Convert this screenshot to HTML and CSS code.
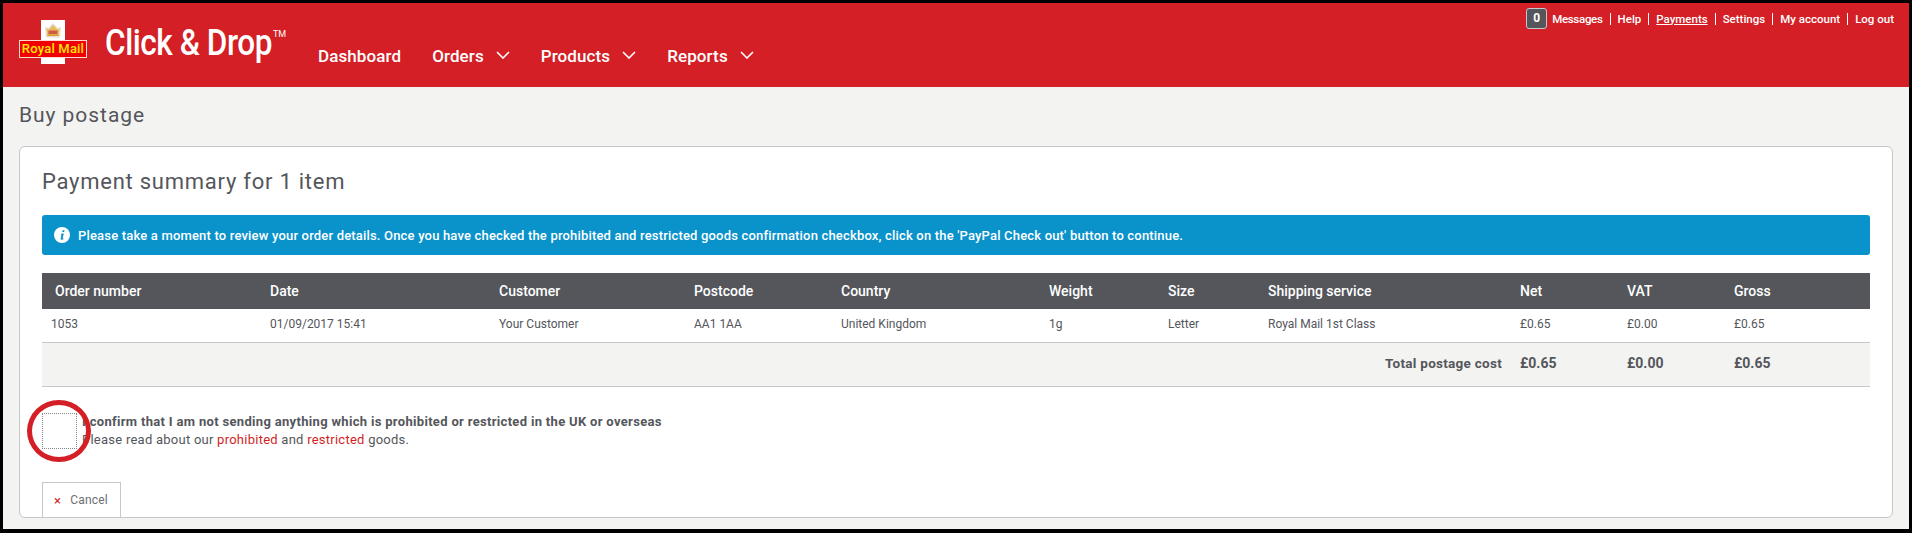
FILE: index.html
```html
<!DOCTYPE html>
<html lang="en">
<head>
<meta charset="utf-8">
<title>Click &amp; Drop - Buy postage</title>
<link rel="stylesheet" href="styles.css">
</head>
<body>
<div class="frame">
  <header class="masthead">
    <svg class="logo" width="70" height="46" viewBox="0 0 70 46" aria-label="Royal Mail">
      <rect x="22" y="0" width="24" height="44" fill="#fff"/>
      <path d="M26 7 L29.500 8 L31.500 5.500 L34 3 L36.500 5.500 L38.500 8 L42 7 L41 17.500 H27 Z" fill="#e6e0d2"/>
      <path d="M27.500 8.500 L30 9.500 L32 7 L34 5 L36 7 L38 9.500 L40.500 8.500 L39.500 16 H28.500 Z" fill="#e9bb5a"/>
      <path d="M29.500 10.500 H38.500 V14 H29.500 Z" fill="#cf5a45"/>
      <rect x="28.500" y="14.500" width="11" height="1.500" fill="#d99a2b"/>
      <rect x="0.500" y="20.500" width="67" height="17" fill="#f00000" stroke="#ffd9d0" stroke-width="1"/>
      <text x="34" y="33.400" text-anchor="middle" class="logo-text">Royal Mail</text>
    </svg>
    <div class="brand"><span class="brandtext">Click &amp; Drop</span><span class="tm">TM</span></div>
    <nav class="mainnav">
      <a class="mainlink">Dashboard</a>
      <a class="mainlink">Orders<svg class="chev" width="14" height="8" viewBox="0 0 14 8"><path d="M1 1 L7 7 L13 1" fill="none" stroke="#fff" stroke-width="1.600"/></svg></a>
      <a class="mainlink">Products<svg class="chev" width="14" height="8" viewBox="0 0 14 8"><path d="M1 1 L7 7 L13 1" fill="none" stroke="#fff" stroke-width="1.600"/></svg></a>
      <a class="mainlink">Reports<svg class="chev" width="14" height="8" viewBox="0 0 14 8"><path d="M1 1 L7 7 L13 1" fill="none" stroke="#fff" stroke-width="1.600"/></svg></a>
    </nav>
    <nav class="topnav">
      <span class="badge">0</span>
      <a class="toplink first">Messages</a>
      <a class="toplink">Help</a>
      <a class="toplink current">Payments</a>
      <a class="toplink">Settings</a>
      <a class="toplink">My account</a>
      <a class="toplink last">Log out</a>
    </nav>
  </header>
  <main class="content">
    <h1 class="pagetitle">Buy postage</h1>
    <section class="card">
      <h2 class="cardtitle">Payment summary for 1 item</h2>
      <div class="alert">
        <svg class="infoicon" width="16" height="16" viewBox="0 0 16 16"><circle cx="8" cy="8" r="8" fill="#fff"/><path d="M8.600 3.200h2l-.4 1.900h-2z M7.600 6.600h2.200l-1.100 4.600c-.1.4.3.5 1 .2l-.1.9c-1.600.7-3.200.5-2.900-.9l.8-3.800h-.9z" fill="#0a92cb"/></svg>
        <span>Please take a moment to review your order details. Once you have checked the prohibited and restricted goods confirmation checkbox, click on the 'PayPal Check out' button to continue.</span>
      </div>
      <table class="summary">
        <colgroup>
          <col class="c1"><col class="c2"><col class="c3"><col class="c4"><col class="c5"><col class="c6"><col class="c7"><col class="c8"><col class="c9"><col class="c10"><col class="c11">
        </colgroup>
        <thead>
          <tr>
            <th class="firsthead">Order number</th><th>Date</th><th>Customer</th><th>Postcode</th><th>Country</th><th>Weight</th><th>Size</th><th>Shipping service</th><th>Net</th><th>VAT</th><th>Gross</th>
          </tr>
        </thead>
        <tbody>
          <tr class="datarow">
            <td class="firstcell">1053</td><td>01/09/2017 15:41</td><td>Your Customer</td><td>AA1 1AA</td><td>United Kingdom</td><td>1g</td><td>Letter</td><td>Royal Mail 1st Class</td><td>£0.65</td><td>£0.00</td><td>£0.65</td>
          </tr>
          <tr class="totalrow">
            <td colspan="8" class="totallabel">Total postage cost</td><td>£0.65</td><td>£0.00</td><td>£0.65</td>
          </tr>
        </tbody>
      </table>
      <div class="confirm">
        <span class="checkbox"></span>
        <div class="confirmtext">
          <strong class="confirmstrong">I confirm that I am not sending anything which is prohibited or restricted in the UK or overseas</strong>
          <span class="confirmnote">Please read about our <a class="redlink">prohibited</a> and <a class="redlink">restricted</a> goods.</span>
        </div>
        <span class="ring"></span>
      </div>
      <a class="cancel"><span class="cancelx">×</span>Cancel</a>
    </section>
  </main>
</div>
</body>
</html>
```
FILE: styles.css
```css
* { box-sizing: border-box; }
html, body { margin: 0; height: 100%; }
body { background: #000; font-family: Roboto, "Liberation Sans", sans-serif; color: #54565b; overflow: hidden; }
.frame { height: 533px; border: solid #000; border-width: 3px 3px 4px 3px; background: #f3f3f1; display: flex; flex-direction: column; overflow: hidden; }

.masthead { position: relative; height: 84px; background: #d31f25; flex: none; display: flex; align-items: flex-start; padding: 17px 0 0 16px; color: #fff; }
.logo { flex: none; display: block; }
.logo-text { font-family: Roboto, sans-serif; font-size: 13px; font-weight: 500; letter-spacing: .2px; fill: #ffe600; }
.brand { display: flex; align-items: flex-start; font-size: 36px; font-weight: 500; line-height: 42px; margin: 2px 0 0 16px; width: 213px; white-space: nowrap; flex: none; }
.brandtext { display: inline-block; width: 167px; transform: scaleX(.875); transform-origin: 0 50%; letter-spacing: -.5px; }
.tm { font-size: 9px; font-weight: 400; line-height: 10px; margin: 7px 0 0 1px; }
.mainnav { display: flex; margin-top: 25px; gap: 31px; font-size: 17px; font-weight: 500; line-height: 22px; letter-spacing: .1px; }
.mainlink { display: flex; align-items: center; white-space: nowrap; }
.chev { margin: -3px 0 0 12px; }
.topnav { position: absolute; top: 5px; right: 15px; display: flex; align-items: center; font-size: 11.500px; font-weight: 500; line-height: 20px; }
.badge { width: 21px; height: 21px; margin-right: 5px; border: 1px solid #c3c8cb; border-radius: 3px; background: #54565b; text-align: center; font-size: 12px; font-weight: 700; line-height: 19px; }
.toplink { padding: 0 7px; border-right: 1px solid #fff; line-height: 12px; white-space: nowrap; }
.toplink.first { padding-left: 0; letter-spacing: -.3px; }
.toplink.last { padding-right: 0; border-right: 0; }
.current { text-decoration: underline; }

.content { flex: 1; padding: 0 16px 0 16px; display: flex; flex-direction: column; }
.pagetitle { margin: 15px 0 18px; font-size: 21px; font-weight: 400; line-height: 26px; letter-spacing: .95px; }
.card { height: 372px; background: #fff; border: 1px solid #c3c8cb; border-radius: 6px; padding: 22px 22px 0 22px; overflow: hidden; }
.cardtitle { margin: 0 0 20px; font-size: 22px; font-weight: 400; line-height: 26px; letter-spacing: .75px; }
.alert { height: 40px; border-radius: 3px; background: #0a92cb; color: #fff; display: flex; align-items: center; padding-left: 12px; font-size: 13px; font-weight: 500; letter-spacing: .18px; }
.infoicon { flex: none; margin-right: 8px; }

.summary { width: 1828px; margin-top: 18px; border-collapse: collapse; table-layout: fixed; font-size: 12px; }
.c1 { width: 228px; } .c2 { width: 229px; } .c3 { width: 195px; } .c4 { width: 147px; } .c5 { width: 208px; } .c6 { width: 119px; } .c7 { width: 100px; } .c8 { width: 252px; } .c9 { width: 107px; } .c10 { width: 107px; } .c11 { width: 136px; }
.summary th { height: 36px; background: #54565b; color: #fff; font-size: 14px; font-weight: 500; text-align: left; padding: 0; }
.summary td { padding: 0 0 2px; text-align: left; }
.summary .firsthead { padding-left: 13px; }
.summary .firstcell { padding-left: 9px; }
.datarow { height: 33px; border-bottom: 1px solid #c3c8cb; }
.totalrow { height: 44px; background: #f3f3f1; border-bottom: 1px solid #c3c8cb; font-size: 14px; font-weight: 700; }
.summary .totallabel { text-align: right; padding-right: 18px; font-size: 13.500px; letter-spacing: .27px; }

.confirm { position: relative; display: flex; align-items: flex-start; margin-top: 26px; height: 36px; }
.checkbox { flex: none; width: 35px; height: 36px; border: 1px dotted #888; margin-right: 5px; }
.confirmtext { display: flex; flex-direction: column; gap: 1px; font-size: 13px; line-height: 17px; letter-spacing: .25px; }
.confirmstrong { font-weight: 700; letter-spacing: .32px; }
.redlink { color: #d31f25; }
.ring { position: absolute; left: -15px; top: -13px; width: 64px; height: 62px; border: 5px solid #d31f25; border-radius: 50%; }
.cancel { display: flex; align-items: center; width: 79px; height: 40px; margin-top: 33px; border: 1px solid #c3c8cb; padding: 0 0 3px 11px; font-size: 12px; letter-spacing: .2px; color: #6c6f74; }
.cancelx { color: #d31f25; font-size: 13px; margin-right: 9px; }
```
